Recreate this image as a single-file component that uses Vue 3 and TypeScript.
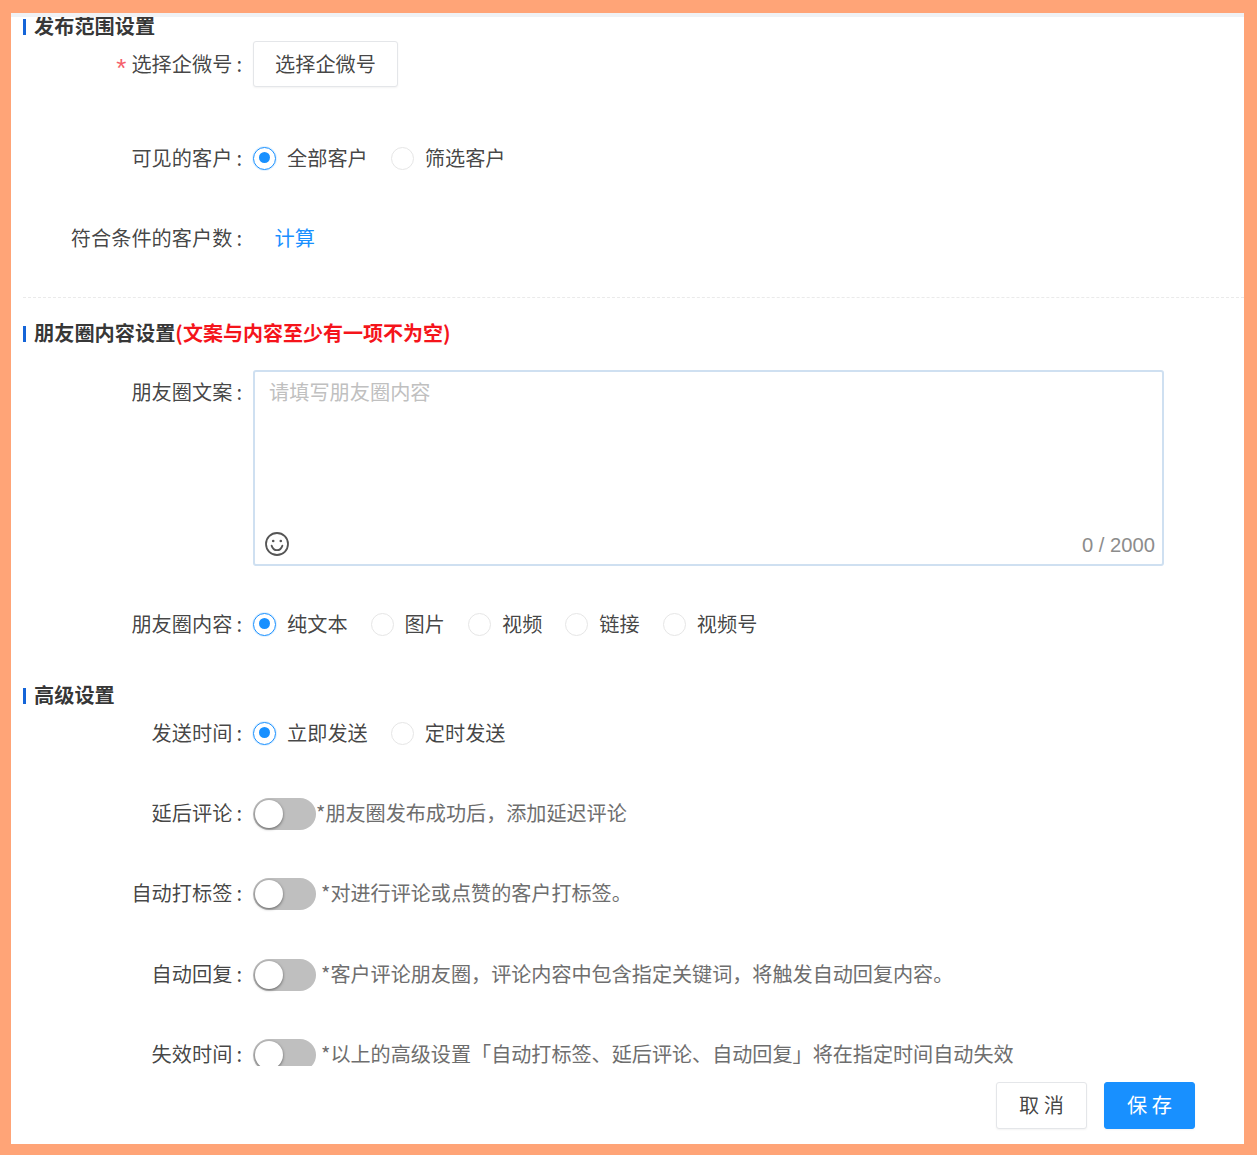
<script setup lang="ts">
import { ref } from 'vue'

interface Row { label: string; hint: string; flush?: boolean; checked: boolean }

const contentTypes = ['纯文本', '图片', '视频', '链接', '视频号']
const visibleTypes = ['全部客户', '筛选客户']
const sendTypes = ['立即发送', '定时发送']
const copy = ref('')

const toggles: Row[] = [
  { label: '延后评论', hint: '*朋友圈发布成功后，添加延迟评论', flush: true, checked: false },
  { label: '自动打标签', hint: '*对进行评论或点赞的客户打标签。', checked: false },
  { label: '自动回复', hint: '*客户评论朋友圈，评论内容中包含指定关键词，将触发自动回复内容。', checked: false },
  { label: '失效时间', hint: '*以上的高级设置「自动打标签、延后评论、自动回复」将在指定时间自动失效', checked: false }
]
</script>

<template>
  <div class="frame">
    <div class="panel">
      <div class="strip"></div>
      <div class="scroll">
        <h3 class="heading first">发布范围设置</h3>
        <div class="row row-a">
          <div class="label"><span class="req">*</span>选择企微号<span class="colon">:</span></div>
          <button class="btn pick" type="button">选择企微号</button>
        </div>
        <div class="row">
          <div class="label">可见的客户<span class="colon">:</span></div>
          <div class="radios">
            <label v-for="(t, i) in visibleTypes" :key="t" class="radio">
              <span class="dot" :class="{ on: i === 0 }"></span><span class="txt">{{ t }}</span>
            </label>
          </div>
        </div>
        <div class="row row-c">
          <div class="label">符合条件的客户数<span class="colon">:</span></div>
          <a class="link">计算</a>
        </div>
        <div class="divider"></div>

        <h3 class="heading second">朋友圈内容设置<span class="warn">(文案与内容至少有一项不为空)</span></h3>
        <div class="row row-top">
          <div class="label">朋友圈文案<span class="colon">:</span></div>
          <div class="editor">
            <textarea v-model="copy" class="area" placeholder="请填写朋友圈内容"></textarea>
            <div class="editor-foot">
              <svg class="smile" width="26" height="26" viewBox="0 0 26 26" fill="none" stroke="#555" stroke-width="1.8">
                <circle cx="13" cy="13" r="11" />
                <path d="M7.6 14.6c1 3 3 4.6 5.4 4.6s4.400-1.600 5.400-4.600" stroke-linecap="round" />
                <circle cx="9.200" cy="10" r="1.300" fill="#555" stroke="none" />
                <circle cx="16.800" cy="10" r="1.300" fill="#555" stroke="none" />
              </svg>
              <span class="count">0 / 2000</span>
            </div>
          </div>
        </div>
        <div class="row">
          <div class="label">朋友圈内容<span class="colon">:</span></div>
          <div class="radios">
            <label v-for="(t, i) in contentTypes" :key="t" class="radio">
              <span class="dot" :class="{ on: i === 0 }"></span><span class="txt">{{ t }}</span>
            </label>
          </div>
        </div>

        <h3 class="heading third">高级设置</h3>
        <div class="row row-send">
          <div class="label">发送时间<span class="colon">:</span></div>
          <div class="radios">
            <label v-for="(t, i) in sendTypes" :key="t" class="radio">
              <span class="dot" :class="{ on: i === 0 }"></span><span class="txt">{{ t }}</span>
            </label>
          </div>
        </div>
        <div v-for="r in toggles" :key="r.label" class="row toggle-row">
          <div class="label">{{ r.label }}<span class="colon">:</span></div>
          <span class="switch"><span class="knob"></span></span>
          <span class="hint" :class="{ flush: r.flush }">{{ r.hint }}</span>
        </div>
      </div>
      <div class="footer">
        <button class="btn act" type="button">取 消</button>
        <button class="btn act primary" type="button">保 存</button>
      </div>
    </div>
  </div>
</template>

<style>
html, body { margin: 0; background: #ffa477; }
</style>

<style scoped>
.frame {
  box-sizing: border-box;
  width: 1257px;
  height: 1155px;
  padding: 13px 13px 11px 11px;
  background: #ffa477;
  font-family: "Noto Sans CJK SC", "Noto Sans", sans-serif;
  font-size: 20.2px;
  color: rgba(0, 0, 0, 0.74);
}
.panel { height: 100%; background: #fff; display: flex; flex-direction: column; }
.strip { height: 4px; background: #f0f2f5; flex: none; }
.scroll { height: 1049px; flex: none; overflow: hidden; padding-left: 12px; }
.heading {
  margin: 0;
  height: 24px;
  line-height: 24px;
  font-size: 20.2px;
  font-weight: 700;
  color: rgba(0, 0, 0, 0.8);
  display: flex;
  align-items: center;
}
.heading::before {
  content: "";
  width: 3px;
  height: 16px;
  background: #1565d8;
  margin: 1px 8px 0 0;
  flex: none;
}
.heading.first { height: 18px; margin-bottom: 6px; }
.heading.second { margin: 23px 0 25px; }
.heading.third { margin: 36px 0 3px; }
.warn { color: #f5141b; font-size: 20px; }
.row { display: flex; align-items: center; min-height: 46px; margin-bottom: 34px; }
.row-a { margin-bottom: 48px; }
.row-c { margin-bottom: 36px; }
.row-top { align-items: flex-start; margin-bottom: 35px; }
.row-send { margin-bottom: 35px; }
.toggle-row:nth-last-child(2) { margin-top: 35px; }
.label { width: 220px; margin-right: 10px; height: 46px; line-height: 46px; text-align: right; flex: none; white-space: nowrap; }
.row-top .label { line-height: 44px; }
.toggle-row .label { line-height: 44px; }
.colon { margin-left: 4px; margin-right: 1px; }
.req { color: #f5606a; margin-right: 5px; font-size: 26px; vertical-align: -5px; line-height: 0; font-family: "Liberation Sans", sans-serif; }
.btn {
  font: inherit;
  color: inherit;
  background: #fff;
  border: 1px solid #e4e6e9;
  border-radius: 3px;
  box-shadow: 0 1px 2px rgba(0, 0, 0, 0.05);
  padding: 0 0 2px;
  height: 46px;
}
.pick { width: 145px; }
.radios { display: flex; gap: 23px; }
.radio { display: inline-flex; align-items: center; white-space: nowrap; }
.txt { margin-bottom: 2px; }
.dot {
  box-sizing: border-box;
  width: 23px;
  height: 23px;
  border: 1.5px solid #e6e6e6;
  border-radius: 50%;
  margin-right: 11px;
  background: #fff;
  position: relative;
  flex: none;
}
.dot.on { border-color: #1890ff; box-shadow: 0 0 0 1px rgba(24, 144, 255, 0.12); }
.dot.on::after {
  content: "";
  position: absolute;
  left: 4.5px;
  top: 4.5px;
  width: 11px;
  height: 11px;
  border-radius: 50%;
  background: #1890ff;
}
.link { color: #1890ff; margin: 0 0 2px 21.5px; }
.divider { border-top: 1px dashed #eaeaea; }
.editor {
  box-sizing: border-box;
  width: 911px;
  height: 196px;
  border: 2px solid #cfe0f1;
  border-radius: 3px;
  display: flex;
  flex-direction: column;
}
.area {
  flex: 1;
  border: 0;
  outline: 0;
  resize: none;
  padding: 3px 14px;
  font: inherit;
  line-height: 34px;
  color: inherit;
  background: transparent;
}
.area::placeholder { color: #c0c0c0; }
.editor-foot { display: flex; align-items: center; justify-content: space-between; padding: 0 7px 7px 9px; }
.smile { display: block; }
.count { font-family: "Liberation Sans", sans-serif; color: #8c8c8c; margin-top: 4px; }
.switch {
  width: 63px;
  height: 32px;
  border-radius: 16px;
  background: #bfbfbf;
  position: relative;
  flex: none;
}
.knob {
  position: absolute;
  left: 2px;
  top: 2px;
  width: 28px;
  height: 28px;
  border-radius: 50%;
  background: #fff;
  box-shadow: 0 1px 3px rgba(0, 0, 0, 0.5);
}
.hint { color: #6e6e6e; font-size: 20.1px; margin: 0 0 4px 5px; white-space: nowrap; }
.hint.flush { margin-left: 0; }
.footer { flex: 1; display: flex; justify-content: flex-end; align-items: flex-start; gap: 17px; padding: 16px 49px 0 0; }
.act { width: 91px; height: 47px; }
.primary { background: #1890ff; border-color: #1890ff; color: #fff; }
</style>
